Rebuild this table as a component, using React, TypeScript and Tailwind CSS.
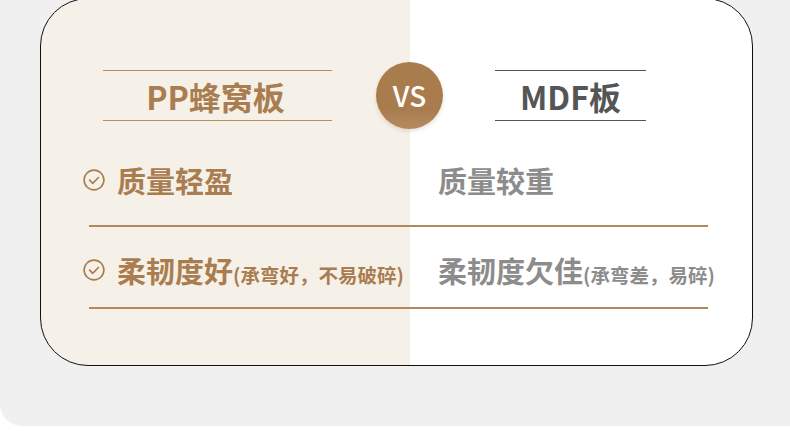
import React from "react";

const cjk = "font-['Noto_Sans_CJK_SC','Noto_Sans',sans-serif]";

function CheckIcon() {
  return (
    <svg width="22" height="22" viewBox="0 0 22 22" fill="none" className="shrink-0">
      <circle cx="11" cy="11" r="9.9" stroke="#a97d50" strokeWidth="1.6" />
      <path d="M6.6 11.2l3.1 3.1 5.7-5.8" stroke="#a97d50" strokeWidth="1.7" strokeLinecap="round" strokeLinejoin="round" />
    </svg>
  );
}

function Divider() {
  return <div className="ml-[48px] h-[2px] w-[619px] bg-[#b08a5c]" />;
}

const rows = [
  { good: "质量轻盈", goodNote: "", bad: "质量较重", badNote: "" },
  { good: "柔韧度好", goodNote: "(承弯好，不易破碎)", bad: "柔韧度欠佳", badNote: "(承弯差，易碎)" },
];

export default function App() {
  return (
    <div className={`h-[431px] w-[790px] overflow-hidden bg-white ${cjk}`}>
      <div className="h-[428px] rounded-bl-[22px] bg-[#f0f0f0] pl-[40px]">
        <div className="relative -mt-[2px] h-[368px] w-[713px] overflow-hidden rounded-[48px] border border-[#111] bg-[linear-gradient(to_right,#f6f1e8_369px,#ffffff_369px)]">
          {/* 标题 */}
          <div className="grid grid-cols-[369px_1fr] pt-[71px]">
            <div className="ml-[62px] flex h-[51px] w-[229px] items-center justify-center border-y border-[#b88b5c]">
              <span className="-ml-[4px] text-[32px] font-bold leading-none text-[#a97d50]">PP蜂窝板</span>
            </div>
            <div className="ml-[85px] flex h-[51px] w-[151px] items-center justify-center border-y border-[#555]">
              <span className="text-[32px] font-bold leading-none text-[#555]">MDF板</span>
            </div>
          </div>

          {/* VS 徽章 */}
          <div className="absolute left-[335px] top-[63px] flex h-[67px] w-[67px] items-center justify-center rounded-full bg-[linear-gradient(to_bottom,#a97c4e_70%,#b48b60_100%)] shadow-[0_2px_4px_rgba(120,90,50,0.18)]">
            <span className="pb-[2px] text-[28px] font-medium leading-none text-white">VS</span>
          </div>

          {rows.map((r, i) => (
            <div key={i}>
              <div className={`grid grid-cols-[369px_1fr] ${i === 0 ? "mt-[39px] mb-[25px]" : "mt-[23px] mb-[17px]"}`}>
                <div className="ml-[42px] flex h-[40px] items-center gap-[12px]">
                  <CheckIcon />
                  <span className="whitespace-nowrap text-[29px] font-bold leading-none text-[#a97d50]">
                    {r.good}
                    {r.goodNote && <span className="text-[19.5px]">{r.goodNote}</span>}
                  </span>
                </div>
                <div className="ml-[28px] flex h-[40px] items-center">
                  <span className="whitespace-nowrap text-[29px] font-bold leading-none text-[#8c8c8c]">
                    {r.bad}
                    {r.badNote && <span className="text-[19.5px]">{r.badNote}</span>}
                  </span>
                </div>
              </div>
              <Divider />
            </div>
          ))}
        </div>
      </div>
    </div>
  );
}
